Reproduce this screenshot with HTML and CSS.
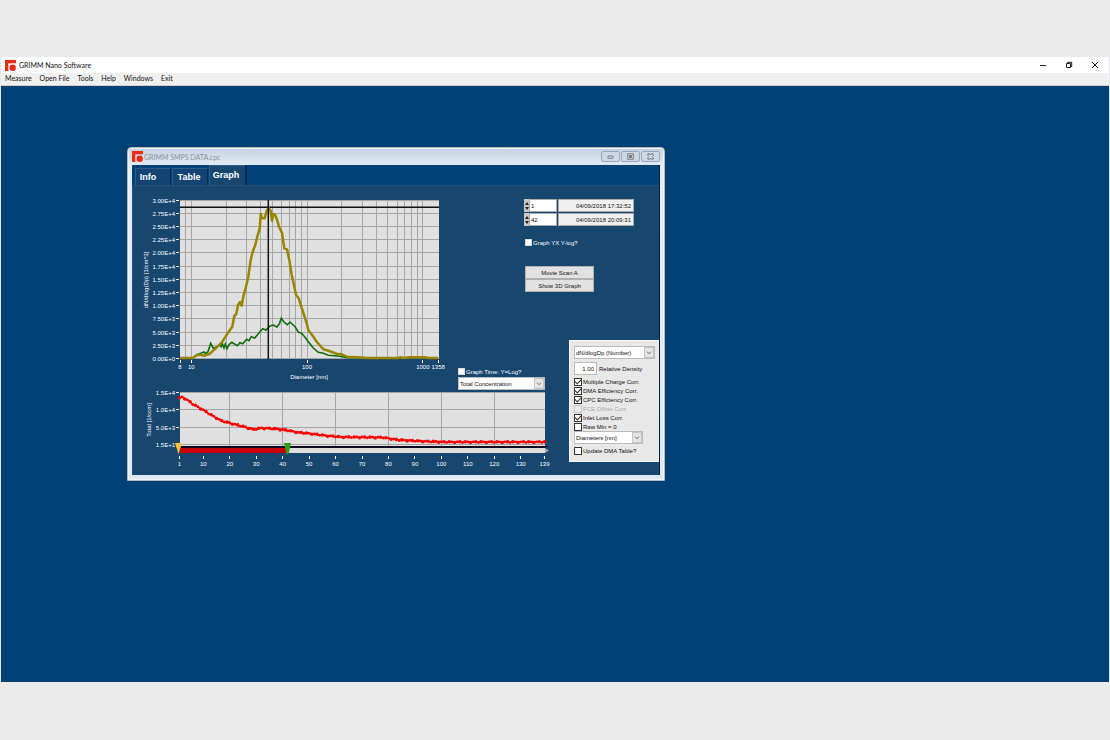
FILE: index.html
```
<!DOCTYPE html>
<html lang="en">
<head>
    <meta charset="UTF-8">
    <title>GRIMM Nano Software</title>
    <link rel="stylesheet" href="styles.css">
</head>
<body>
<div class="app">
    <header class="titlebar">
        <svg class="logo" viewBox="0 0 10 10"><path d="M0 0H10V3H3V10H0Z"/><circle cx="7" cy="7" r="2.9"/></svg>
        <h1>GRIMM Nano Software</h1>
        <div class="winbtns">
            <button aria-label="Minimize"><svg viewBox="0 0 8 8"><path d="M1 4.5H7"/></svg></button>
            <button aria-label="Restore"><svg viewBox="0 0 8 8"><path d="M1.5 2.5H5.5V6.5H1.5ZM2.5 2.5V1.3H6.7V5.5H5.5"/></svg></button>
            <button aria-label="Close"><svg viewBox="0 0 8 8"><path d="M1 1L7 7M7 1L1 7"/></svg></button>
        </div>
    </header>
    <nav class="menu">
        <a href="#">Measure</a>
        <a href="#">Open File</a>
        <a href="#">Tools</a>
        <a href="#">Help</a>
        <a href="#">Windows</a>
        <a href="#">Exit</a>
    </nav>
    <main class="workspace">
        <section class="window">
            <div class="window-title">
                <svg class="logo" viewBox="0 0 10 10"><path d="M0 0H10V3H3V10H0Z"/><circle cx="7" cy="7" r="2.9"/></svg>
                <h2>GRIMM SMPS DATA.cpc</h2>
                <div class="window-btns">
                    <button aria-label="Minimize"><svg viewBox="0 0 8 8"><rect x="1" y="3.5" width="6" height="2.5" rx="1"/></svg></button>
                    <button aria-label="Maximize"><svg viewBox="0 0 8 8"><rect x="1" y="1" width="6" height="6"/><rect x="3" y="3" width="2" height="2"/></svg></button>
                    <button aria-label="Close"><svg viewBox="0 0 8 8"><path d="M1 1H3L4 2.5L5 1H7V2.5L5.7 4L7 5.5V7H5L4 5.5L3 7H1V5.5L2.3 4L1 2.5Z"/></svg></button>
                </div>
            </div>
            <div class="client">
                <div class="tabs">
                    <button>Info</button>
                    <button>Table</button>
                    <button class="selected">Graph</button>
                </div>
                <div class="panel">
                    <svg id="size" class="chart size-chart" viewBox="0 0 312 190"></svg>

                    <div class="scans">
                        <div class="scan">
                            <span class="spin"></span><input type="text" value="1" aria-label="First scan">
                            <input class="stamp" type="text" value="04/09/2018 17:32:52" aria-label="First scan time" readonly>
                        </div>
                        <div class="scan">
                            <span class="spin"></span><input type="text" value="42" aria-label="Last scan">
                            <input class="stamp" type="text" value="04/09/2018 20:09:31" aria-label="Last scan time" readonly>
                        </div>
                        <label class="check plain ylog"><input type="checkbox">Graph YX Y-log?</label>
                        <div class="actions">
                            <button>Movie Scan A</button>
                            <button>Show 3D Graph</button>
                        </div>
                    </div>

                    <div class="time-opts">
                        <label class="check plain"><input type="checkbox">Graph Time: Y=Log?</label>
                        <div class="drop">
                            <select aria-label="Time series"><option>Total Concentration</option></select>
                            <svg viewBox="0 0 10 10"><path d="M2.5 4L5 6.5L7.5 4"/></svg>
                        </div>
                    </div>

                    <div class="time">
                        <svg id="total" class="chart" viewBox="0 0 416 57"></svg>
                        <div class="range">
                            <div class="track"></div>
                            <input class="from" type="range" min="1" max="139" value="1" aria-label="From scan">
                            <input class="to" type="range" min="1" max="139" value="42" aria-label="To scan">
                        </div>
                        <svg id="scale" class="chart" viewBox="0 0 416 14"></svg>
                    </div>

                    <form class="settings">
                        <div class="drop wide">
                            <select aria-label="Quantity"><option>dN/dlogDp (Number)</option></select>
                            <svg viewBox="0 0 10 10"><path d="M2.5 4L5 6.5L7.5 4"/></svg>
                        </div>
                        <label class="density"><input type="text" value="1.00">Relative Density</label>
                        <div class="checks">
                            <label class="check"><input type="checkbox" checked>Multiple Charge Corr.</label>
                            <label class="check"><input type="checkbox" checked>DMA Efficiency Corr.</label>
                            <label class="check"><input type="checkbox" checked>CPC Efficiency Corr.</label>
                            <label class="check off"><input type="checkbox" disabled>FCE Offset Corr.</label>
                            <label class="check"><input type="checkbox" checked>Inlet Loss Corr.</label>
                            <label class="check"><input type="checkbox">Raw Min = 0</label>
                        </div>
                        <div class="drop">
                            <select aria-label="Table column"><option>Diameters [nm]</option></select>
                            <svg viewBox="0 0 10 10"><path d="M2.5 4L5 6.5L7.5 4"/></svg>
                        </div>
                        <label class="check"><input type="checkbox">Update DMA Table?</label>
                    </form>
                </div>
            </div>
        </section>
    </main>
</div>
<script src="charts.js"></script>
</body>
</html>
```
FILE: styles.css
```
*{
    box-sizing: border-box;
    margin: 0;
    padding: 0;
}
body{
    min-height: 100vh;
    padding: 57px 0 58px;
    display: flex;
    background: #ebebeb;
    font: 6px/8px "Liberation Sans", Arial, sans-serif;
    color: #111;
}
button, input, select{
    font: inherit;
    color: inherit;
    border: 0;
    border-radius: 0;
    background: none;
}
svg{
    display: block;
}
.app{
    flex: 1;
    display: flex;
    flex-direction: column;
    border: solid #e4e8ec;
    border-width: 0 1px;
}
.titlebar{
    height: 16px;
    display: flex;
    align-items: center;
    gap: 3px;
    padding: 0 1px 0 4px;
    background: #fff;
}
.logo{
    width: 11px;
    height: 11px;
    fill: #ee2a12;
}
.titlebar h1{
    flex: 1;
    font: 7px/10px Lato, sans-serif;
}
.winbtns{
    display: flex;
}
.winbtns button{
    width: 26px;
    height: 16px;
    display: grid;
    place-items: center;
}
.winbtns svg{
    width: 8px;
    height: 8px;
    fill: none;
    stroke: #222;
}
.menu{
    height: 13px;
    display: flex;
    gap: 8px;
    padding-left: 4px;
    background: #f0f0f0;
    border-bottom: 1px solid #d5cfc8;
    font: 7px/11px Lato, sans-serif;
}
.menu a{
    color: #111;
    text-decoration: none;
}
.workspace{
    flex: 1;
    position: relative;
    background: #004275;
}

/* data window */
.window{
    position: absolute;
    left: 126px;
    top: 61px;
    width: 538px;
    padding: 0 4px 5px;
    border: 1px solid #b3b8be;
    border-radius: 4px 4px 0 0;
    background: linear-gradient(#c3d0df, #e4edf7 18px, #dce8f5);
    box-shadow: inset 0 0 0 1px #f4f4f2;
}
.window-title{
    height: 17px;
    display: flex;
    align-items: center;
    gap: 1px;
}
.window-title h2{
    flex: 1;
    font: 7px/10px Lato, sans-serif;
    color: #8d9298;
}
.window-btns{
    display: flex;
    gap: 1px;
}
.window-btns button{
    width: 19px;
    height: 11px;
    display: grid;
    place-items: center;
    border: 1px solid #9ba8b9;
    border-radius: 2px;
    background: #cdd8e5;
}
.window-btns svg{
    width: 7px;
    height: 7px;
    fill: #f4f4f4;
    stroke: #555b64;
}
.client{
    border-right: 1px solid #001f4e;
    background: #004275;
}
.tabs{
    height: 21px;
    display: flex;
    align-items: flex-end;
    gap: 1px;
    padding-left: 3px;
    border-bottom: 1px solid #24507c;
}
.tabs button{
    width: 36px;
    height: 17px;
    padding-right: 10px;
    border: solid #2f5c86;
    border-width: 1px 0 0 1px;
    border-right: 1px solid #002b55;
    background: #114373;
    font: bold 9px/14px "Liberation Sans", Arial, sans-serif;
    color: #fff;
}
.tabs button + button{
    padding-right: 2px;
}
.tabs button.selected{
    width: 38px;
    height: 20px;
    padding: 0 4px 2px 1px;
    border-right-width: 2px;
    background: #17466f;
}
.panel{
    display: grid;
    grid-template-columns: 317px 104px 1fr;
    grid-template-rows: 154px 50px auto;
    border-left: 1px solid #24507c;
    background: #17466f;
    color: #fff;
}
.chart{
    width: 100%;
    fill: none;
}
.chart text{
    fill: #fff;
    font-size: 6px;
}
.chart .end{
    text-anchor: end;
}
.chart .mid{
    text-anchor: middle;
}
.chart .plot{
    fill: #e0e0e0;
}
.chart .grid{
    stroke: #a5a5a5;
}
.chart .tick{
    stroke: #fff;
}
.chart .cursor{
    stroke: #111;
    stroke-width: 1.5;
}
.chart .scan-b{
    stroke: #0b6d0b;
    stroke-width: 1.6;
}
.chart .scan-a{
    stroke: #9a8500;
    stroke-width: 2.5;
    stroke-linejoin: round;
}
.chart .total{
    stroke: #f00;
    stroke-width: 1.4;
}
.chart .dot{
    fill: #f00;
}
.size-chart{
    grid-area: 1 / 1 / 3 / 2;
    width: 312px;
    margin: 7px 0 0 4px;
}
.scans{
    grid-area: 1 / 2 / 2 / 4;
    padding: 13px 0 0 74px;
}
.scan{
    display: flex;
    margin-bottom: 1px;
    color: #111;
}
.scan input{
    width: 28px;
    height: 13px;
    padding-left: 1px;
    border: 1px solid #aaa;
    background: #fff;
}
.scan .stamp{
    width: 76px;
    margin-left: 1px;
    padding-right: 2px;
    background: #f0f0f0;
    text-align: right;
}
.spin{
    width: 5px;
    height: 13px;
    display: flex;
    flex-direction: column;
    justify-content: center;
    gap: 2px;
    align-items: center;
    background: #c8c8c4;
}
.spin::before, .spin::after{
    content: "";
    border: 2px solid transparent;
    border-top: 0;
    border-bottom: 3px solid #222;
}
.spin::after{
    border-bottom: 0;
    border-top: 3px solid #222;
}
.check{
    height: 9px;
    display: flex;
    align-items: center;
    gap: 1px;
    white-space: nowrap;
}
.check input{
    appearance: none;
    width: 8px;
    height: 8px;
    display: grid;
    place-items: center;
    border: 1px solid #333;
    background: #fff;
}
.check input:checked::before{
    content: "";
    width: 5px;
    height: 3px;
    margin-bottom: 2px;
    border: solid #333;
    border-width: 0 0 1px 1px;
    transform: rotate(-45deg);
}
.check.plain input{
    width: 7px;
    height: 7px;
    border-color: #ddd;
}
.check.off{
    color: #a8a8a8;
}
.check.off input{
    border-color: #c8c8c8;
    background: #e8e8e8;
}
.ylog{
    margin: 12px 0 19px 1px;
}
.actions{
    width: 69px;
    margin-left: 1px;
    display: grid;
}
.actions button{
    height: 13px;
    border: 1px solid #b0b0b0;
    background: #e2e2e2;
    color: #111;
}
.drop{
    display: grid;
    grid-template-columns: 1fr 11px;
    align-items: center;
    color: #111;
}
.drop select{
    appearance: none;
    grid-area: 1 / 1 / 2 / 3;
    height: 13px;
    padding-left: 1px;
    border: 1px solid #bbb;
    background: #fff;
}
.drop svg{
    grid-area: 1 / 2;
    width: 10px;
    height: 11px;
    background: #e4e4e4;
    border: 1px solid #c4c4c4;
    fill: none;
    stroke: #444;
    pointer-events: none;
}
.time-opts{
    grid-area: 2 / 2;
    align-self: end;
    width: 87px;
    margin-left: 8px;
}
.time-opts .check{
    margin-bottom: 1px;
}
.time{
    grid-area: 3 / 1 / 4 / 3;
    padding: 0 1px 7px 4px;
}

/* two handles on one track */
.range{
    height: 11px;
    display: grid;
    grid-template-rows: 11px;
    grid-template-columns: 1fr;
    margin: -4px 4px 0 38px;
}
.range > *{
    grid-area: 1 / 1;
    min-width: 0;
}
.track{
    height: 7px;
    margin: 3px 0 0 5px;
    border-top: 2px solid #0a0a20;
    border-right: 4px solid #17466f;
    background: linear-gradient(90deg, #c80000 30%, #dededa 30%);
    display: flex;
    justify-content: flex-end;
}
.track::after{
    content: "";
    width: 4px;
    height: 5px;
    margin-right: -4px;
    clip-path: polygon(0 0, 100% 50%, 0 100%);
    background: #a8a8a8;
}
.range input{
    appearance: none;
    width: 100%;
    height: 11px;
    pointer-events: none;
}
.range input::-webkit-slider-thumb{
    appearance: none;
    width: 7px;
    height: 11px;
    clip-path: polygon(0 0, 100% 0, 50% 100%);
    background: #ffc233;
    pointer-events: auto;
}
.range .to::-webkit-slider-thumb{
    clip-path: polygon(0 0, 100% 0, 65% 100%, 35% 100%);
    background: #2ca010;
}
.settings{
    grid-area: 2 / 3 / 4 / 4;
    justify-self: end;
    align-self: start;
    width: 90px;
    padding: 5px 4px 6px;
    border: solid #f6f6f6;
    border-width: 1px 0 1px 1px;
    background: #e8e8e8;
    color: #111;
}
.settings .drop{
    width: 69px;
    margin-bottom: 2px;
}
.settings .wide{
    width: 81px;
    margin-bottom: 3px;
}
.density{
    display: flex;
    align-items: center;
    gap: 2px;
    margin-bottom: 2px;
}
.density input{
    width: 23px;
    height: 13px;
    padding-right: 2px;
    border: 1px solid #bbb;
    background: #fff;
    text-align: right;
}
```
FILE: charts.js
```
var NS = 'http://www.w3.org/2000/svg';

function add(svg, name, cls, attrs, text){
    var el = document.createElementNS(NS, name);
    el.setAttribute('class', cls);
    for(var k in attrs){
        el.setAttribute(k, attrs[k]);
    }
    if(text){
        el.textContent = text;
    }
    svg.appendChild(el);
}
function line(svg, cls, x1, y1, x2, y2){
    add(svg, 'path', cls, {d: 'M' + x1 + ' ' + y1 + 'L' + x2 + ' ' + y2});
}
function snap(v){
    return Math.floor(v) + 0.5;
}

// size distribution, log x axis from 8 to 1358 nm
var oSize = document.getElementById('size');
function logX(d){
    return 43 + Math.log10(d / 8) * 115.8;
}
add(oSize, 'rect', 'plot', {x: 43, y: 7, width: 259, height: 159});
for(var dec = 1; dec <= 1000; dec *= 10){
    for(var m = 1; m < 10; m++){
        if(dec * m > 8 && dec * m < 1358){
            line(oSize, 'grid', snap(logX(dec * m)), 7, snap(logX(dec * m)), 166);
        }
    }
}
var aY = ['3.00E+4', '2.75E+4', '2.50E+4', '2.25E+4', '2.00E+4', '1.75E+4', '1.50E+4', '1.25E+4', '1.00E+4', '7.50E+3', '5.00E+3', '2.50E+3', '0.00E+0'];
for(var i = 0; i < aY.length; i++){
    var y = snap(7 + i * 13.2);
    line(oSize, 'grid', 43, y, 302, y);
    line(oSize, 'tick', 39, y, 42, y);
    add(oSize, 'text', 'end', {x: 38, y: y + 2}, aY[i]);
}
[8, 10, 100, 1000, 1358].forEach(function(d){
    line(oSize, 'tick', snap(logX(d)), 167, snap(logX(d)), 170);
    add(oSize, 'text', 'mid', {x: logX(d), y: 176}, d);
});
add(oSize, 'text', 'mid', {x: 172, y: 186}, 'Diameter [nm]');
add(oSize, 'text', 'mid', {transform: 'translate(11 87) rotate(-90)'}, 'dN/dlog(Dp) [1/cm^3]');

var scanB = [0,504, 38,504, 50,494, 62,490, 72,486, 76,491, 84,485, 92,460, 100,475, 108,472, 118,464, 124,470, 127,460, 132,474, 136,462, 141,476, 147,464, 155,457, 172,467, 180,458, 188,461, 200,448, 207,452, 214,440, 224,444, 240,425, 248,416, 258,420, 270,408, 280,405, 290,411, 298,402, 304,385, 312,396, 322,404, 330,396, 345,410, 355,426, 365,430, 375,442, 385,455, 400,474, 415,487, 430,490, 445,496, 480,499, 500,503, 774,504];
var scanA = [0,504, 38,504, 50,496, 62,494, 72,497, 90,491, 108,474, 125,458, 143,430, 157,410, 163,378, 169,372, 174,345, 180,336, 185,347, 190,320, 198,290, 205,260, 212,210, 218,185, 226,165, 232,140, 239,115, 242,72, 247,85, 254,85, 260,62, 266,54, 272,62, 276,92, 280,72, 286,76, 292,92, 297,110, 306,128, 313,175, 321,178, 328,210, 335,255, 342,285, 348,315, 356,325, 364,350, 372,375, 380,400, 385,420, 398,437, 410,455, 430,478, 445,482, 470,491, 485,493, 500,500, 535,502, 560,504, 655,504, 660,502, 672,504, 688,502, 735,502, 745,504, 774,504];
function curve(cls, a){
    var pts = '';
    for(var i = 0; i < a.length; i += 2){
        pts += (43 + a[i] / 3).toFixed(1) + ',' + (a[i + 1] / 3 - 3).toFixed(1) + ' ';
    }
    add(oSize, 'polyline', cls, {points: pts});
}
curve('scan-b', scanB);
line(oSize, 'cursor', 43, 14.3, 302, 14.3);
curve('scan-a', scanA);
line(oSize, 'cursor', 131.3, 7, 131.3, 166);

// total concentration over the scans
var oTotal = document.getElementById('total');
var oScale = document.getElementById('scale');
function scanX(n){
    return 42.5 + (n - 1) * 2.645;
}
add(oTotal, 'rect', 'plot', {x: 43, y: 2, width: 365, height: 55});
['1.5E+4', '1.0E+4', '5.0E+3', '1.5E+1'].forEach(function(s, i){
    var y = snap(2 + i * 17.6);
    line(oTotal, 'grid', 43, y, 408, y);
    line(oTotal, 'tick', 39, y, 42, y);
    add(oTotal, 'text', 'end', {x: 38, y: y + 2}, s);
});
for(var n = 20; n < 139; n += 20){
    line(oTotal, 'grid', snap(scanX(n)), 2, snap(scanX(n)), 57);
}
add(oTotal, 'text', 'mid', {transform: 'translate(14 30) rotate(-90)'}, 'Total [1/ccm]');

var aKey = [[1, 8], [2, 7], [4, 10], [6, 14], [10, 20], [13, 25], [17, 31], [20, 33], [25, 36.5], [29, 39.5], [32, 38], [38, 39], [42, 40.5], [46, 42.5], [50, 43.5], [56, 45.5], [62, 47], [78, 47.5], [84, 50], [95, 51.5], [102, 52], [139, 52]];
var pts = '';
for(n = 1, i = 0; n <= 139; n++){
    while(n > aKey[i + 1][0]){
        i++;
    }
    var p = aKey[i], q = aKey[i + 1];
    y = p[1] + (q[1] - p[1]) * (n - p[0]) / (q[0] - p[0]);
    y += n % 3 == 0 ? 0.5 : -0.2;
    pts += scanX(n).toFixed(1) + ',' + y.toFixed(1) + ' ';
    add(oTotal, 'circle', 'dot', {cx: scanX(n).toFixed(1), cy: y.toFixed(1), r: n % 2 ? 1.8 : 1.4});
}
add(oTotal, 'polyline', 'total', {points: pts});

[1, 10, 20, 30, 40, 50, 60, 70, 80, 90, 100, 110, 120, 130, 139].forEach(function(n){
    line(oScale, 'tick', snap(scanX(n)), 2, snap(scanX(n)), 5);
    add(oScale, 'text', 'mid', {x: scanX(n), y: 12}, n);
});
```
